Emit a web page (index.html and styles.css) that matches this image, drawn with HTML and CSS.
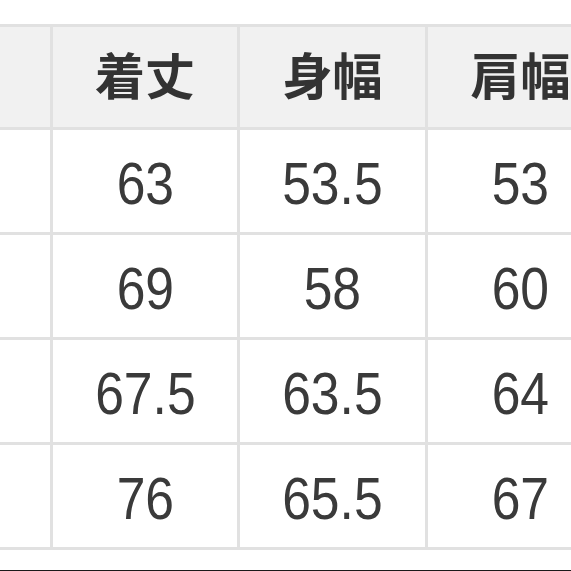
FILE: index.html
```html
<!DOCTYPE html>
<html lang="ja">
<head>
<meta charset="utf-8">
<link rel="stylesheet" href="styles.css">
</head>
<body>
<div class="page">
  <div class="size-table">
    <div class="cell head"></div>
    <div class="cell head"><span class="jp">着丈</span></div>
    <div class="cell head"><span class="jp">身幅</span></div>
    <div class="cell head"><span class="jp">肩幅</span></div>

    <div class="cell"></div>
    <div class="cell"><span class="num">63</span></div>
    <div class="cell"><span class="num">53.5</span></div>
    <div class="cell"><span class="num">53</span></div>

    <div class="cell"></div>
    <div class="cell"><span class="num">69</span></div>
    <div class="cell"><span class="num">58</span></div>
    <div class="cell"><span class="num">60</span></div>

    <div class="cell"></div>
    <div class="cell"><span class="num">67.5</span></div>
    <div class="cell"><span class="num">63.5</span></div>
    <div class="cell"><span class="num">64</span></div>

    <div class="cell"></div>
    <div class="cell"><span class="num">76</span></div>
    <div class="cell"><span class="num">65.5</span></div>
    <div class="cell"><span class="num">67</span></div>
  </div>
  <div class="rule"></div>
</div>
</body>
</html>
```

FILE: styles.css
```css
html, body {
  margin: 0;
  padding: 0;
  background: #ffffff;
  overflow: hidden;
}

.page {
  width: 571px;
  height: 571px;
  overflow: hidden;
  padding-top: 24px;
  box-sizing: border-box;
}

.size-table {
  display: grid;
  grid-template-columns: 50px 184px 185px 185px;
  grid-template-rows: 100px 102px 102px 102px 102px;
  gap: 3px;
  padding: 3px 0;
  width: 613px;
  background: #e1e1e1;
}

.cell {
  background: #ffffff;
  display: flex;
  align-items: center;
  justify-content: center;
  color: #333333;
}

.cell.head {
  background: #f1f1f1;
}

.jp {
  font-family: "Noto Sans CJK JP", "Noto Sans CJK SC", sans-serif;
  font-weight: 700;
  font-size: 50px;
  line-height: 1;
  color: #333333;
  margin-top: -8px;
}

.num {
  display: inline-block;
  font-family: "Liberation Sans", Arial, sans-serif;
  font-size: 60px;
  line-height: 1;
  color: #3a3a3a;
  transform: scaleX(0.86);
  padding-top: 6px;
}

.rule {
  height: 2px;
  background: #1a1a1a;
  margin-top: 20px;
}
```
